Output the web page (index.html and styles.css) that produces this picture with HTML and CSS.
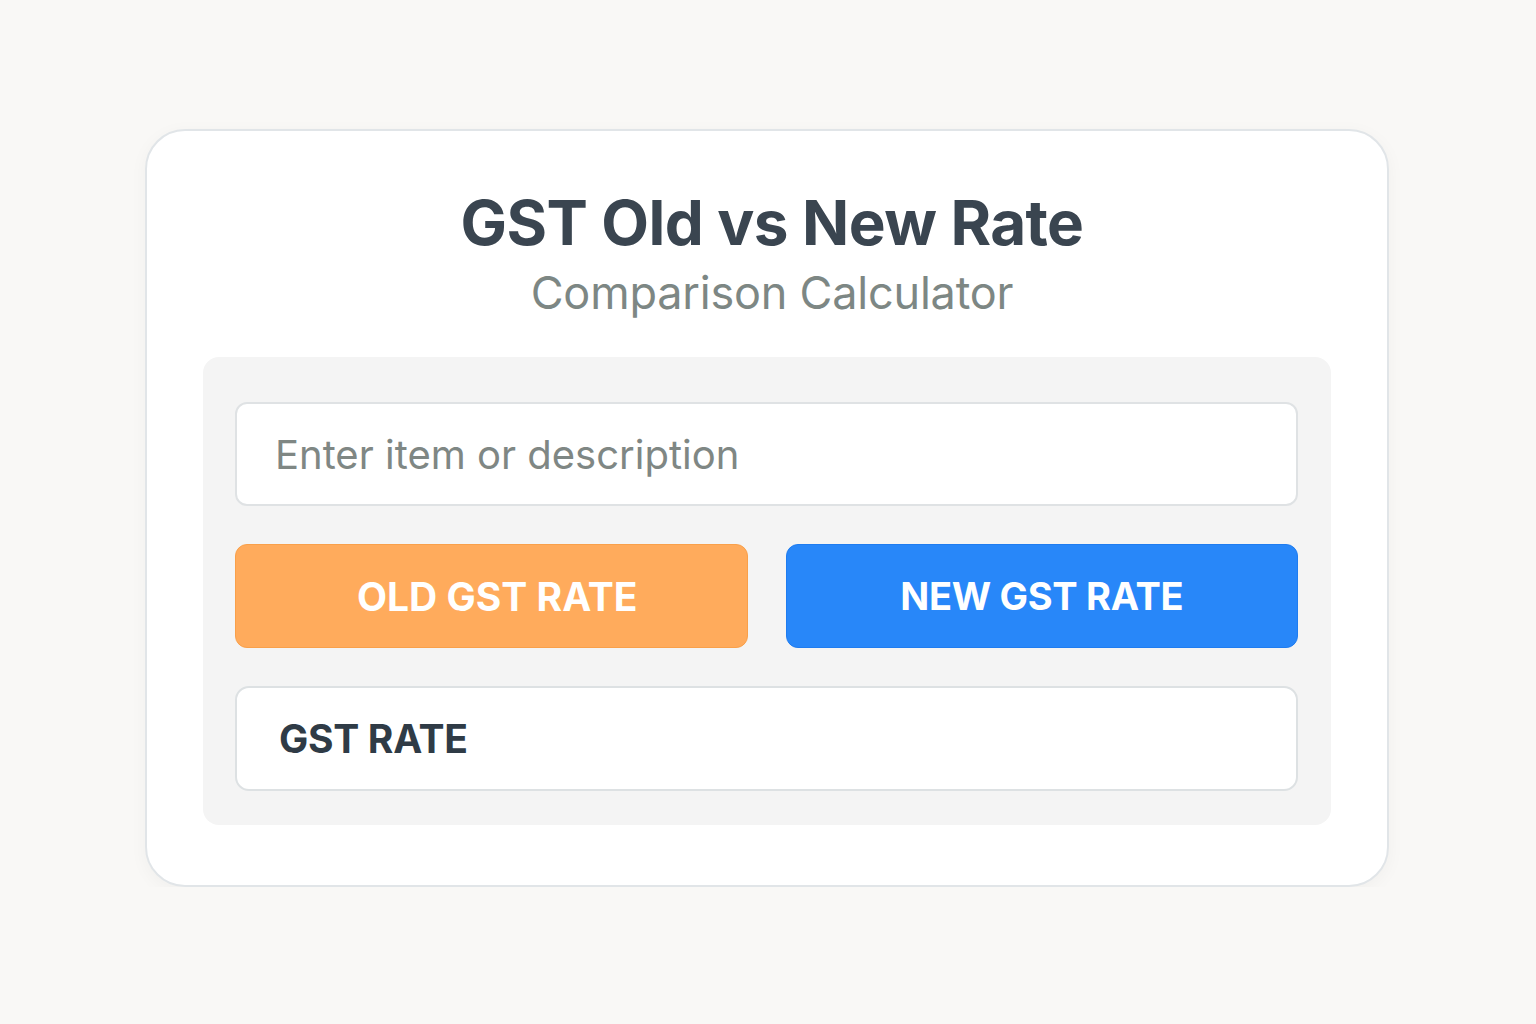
FILE: index.html
```html
<!DOCTYPE html>
<html lang="en">
<head>
    <meta charset="UTF-8">
    <meta name="viewport" content="width=device-width, initial-scale=1.0">
    <title>GST Old vs New Rate - Comparison Calculator</title>
    <link rel="stylesheet" href="styles.css">
</head>
<body>
    <div class="card">
        <div class="header">
            <h1>GST Old vs New Rate</h1>
            <p class="subtitle">Comparison Calculator</p>
        </div>

        <div class="panel">
            <input class="item-input" type="text" placeholder="Enter item or description">

            <div class="buttons">
                <button class="btn btn-old">OLD GST RATE</button>
                <button class="btn btn-new">NEW GST RATE</button>
            </div>

            <div class="result">GST RATE</div>
        </div>
    </div>
</body>
</html>
```

FILE: styles.css
```css
body {
    margin: 0;
    background-color: #f9f8f6;
    font-family: Inter, 'Noto Sans', Arial, sans-serif;
    color: #3a4550;
    padding-top: 129px;
}
.card {
    width: 1244px;
    box-sizing: border-box;
    margin: 0 auto 0 145px;
    background: #fff;
    border: 2px solid #e1e5e8;
    border-radius: 40px;
    box-shadow: 0 4px 18px rgba(0, 0, 0, 0.04);
    padding: 54px 56px 60px;
}
.header {
    padding-left: 10px;
    margin-bottom: 34px;
    text-align: center;
}
h1 {
    margin: 0;
    font-size: 62px;
    font-weight: 700;
    line-height: 76px;
    letter-spacing: -0.6px;
    color: #3a4550;
}
.subtitle {
    margin: 2px 0 0;
    font-size: 45px;
    line-height: 60px;
    letter-spacing: -0.2px;
    color: #7d8784;
}
.panel {
    background: #f4f4f4;
    border-radius: 16px;
    padding: 45px 33px 34px 32px;
    display: flex;
    flex-direction: column;
    gap: 38px;
}
.item-input {
    height: 104px;
    box-sizing: border-box;
    border: 2px solid #dfe2e4;
    border-radius: 12px;
    background: #fff;
    padding: 0 38px;
    font-family: inherit;
    font-size: 40px;
    color: #3a4550;
    outline: none;
}
.item-input::placeholder {
    color: #7f8784;
}
.buttons {
    display: grid;
    grid-template-columns: 1fr 1fr;
    gap: 38px;
}
.btn {
    height: 104px;
    border-radius: 12px;
    font-family: inherit;
    font-size: 38px;
    font-weight: 700;
    letter-spacing: -0.3px;
    color: #fff;
    cursor: pointer;
}
.btn-old {
    background: #ffab5c;
    border: 1px solid #f9a04a;
    padding-left: 18px;
    font-size: 39px;
    letter-spacing: 0;
}
.btn-new {
    background: #2887f9;
    border: 1px solid #1f7cf0;
}
.result {
    height: 105px;
    box-sizing: border-box;
    border: 2px solid #dde1e3;
    border-radius: 14px;
    background: #fff;
    padding: 0 42px;
    display: flex;
    align-items: center;
    font-size: 39px;
    font-weight: 700;
    letter-spacing: -0.3px;
    color: #2f3b46;
}
```
